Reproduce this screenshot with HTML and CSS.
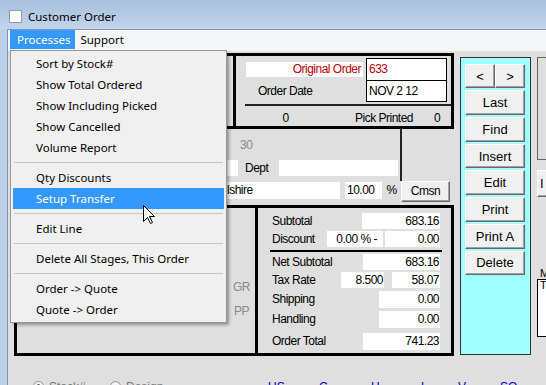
FILE: index.html
```html
<!DOCTYPE html>
<html lang="en">
<head>
    <meta charset="UTF-8">
    <title>Customer Order</title>
    <link rel="stylesheet" href="styles.css">
</head>
<body>
    <!-- barre de titre -->
    <div class="titlebar">
        <span class="appicon"></span>
        <span class="title">Customer Order</span>
    </div>

    <div class="client">
        <div class="menubar">
            <span class="mitem open">Processes</span>
            <span class="mitem">Support</span>
        </div>

        <div class="form">
            <div class="main">
                <!-- entete de commande -->
                <div class="topbox">
                    <div class="custcell"></div>
                    <div class="ordercell">
                        <div class="ohead">
                            <div class="olabels">
                                <div class="origlabel">Original Order</div>
                                <div class="datelabel">Order Date</div>
                            </div>
                            <div class="obox">
                                <div class="ofield red">633</div>
                                <div class="ofield">NOV 2 12</div>
                            </div>
                        </div>
                        <div class="oline"></div>
                        <div class="ofoot">
                            <span class="fz">0</span>
                            <span class="pp">Pick Printed</span>
                            <span class="pz">0</span>
                        </div>
                    </div>
                </div>

                <div class="mid">
                    <div class="midleft">
                        <div class="terms">30</div>
                        <div class="deptrow">
                            <div class="field contact"></div>
                            <div class="dept">Dept</div>
                            <div class="field deptf"></div>
                        </div>
                    </div>
                    <div class="midright"></div>
                </div>

                <div class="addrrow">
                    <div class="field addr">Wilshire</div>
                    <div class="field pct">10.00</div>
                    <div class="pctsign">%</div>
                    <button class="btn cmsn">Cmsn</button>
                </div>

                <!-- lignes et totaux -->
                <div class="bottombox">
                    <div class="linescell">
                        <div class="gr">GR</div>
                        <div class="pp2">PP</div>
                    </div>
                    <div class="totals">
                        <div class="trow r1">
                            <div class="tl">Subtotal</div>
                            <div class="val w78">683.16</div>
                        </div>
                        <div class="trow r2">
                            <div class="tl">Discount</div>
                            <div class="val disc">0.00 % -</div>
                            <div class="val w55 ml2">0.00</div>
                        </div>
                        <div class="trule"></div>
                        <div class="trow r3">
                            <div class="tl">Net Subtotal</div>
                            <div class="val w77">683.16</div>
                        </div>
                        <div class="trow r4">
                            <div class="tl">Tax Rate</div>
                            <div class="val w43">8.500</div>
                            <div class="val w48 ml8">58.07</div>
                        </div>
                        <div class="trow r5">
                            <div class="tl">Shipping</div>
                            <div class="val w61">0.00</div>
                        </div>
                        <div class="trow r6">
                            <div class="tl">Handling</div>
                            <div class="val w61">0.00</div>
                        </div>
                        <div class="trow r7">
                            <div class="tl">Order Total</div>
                            <div class="val w77">741.23</div>
                        </div>
                    </div>
                </div>
            </div>

            <!-- boutons de navigation -->
            <div class="nav">
                <div class="arrows">
                    <button class="btn navbtn half">&lt;</button>
                    <button class="btn navbtn half">&gt;</button>
                </div>
                <button class="btn navbtn">Last</button>
                <button class="btn navbtn">Find</button>
                <button class="btn navbtn">Insert</button>
                <button class="btn navbtn">Edit</button>
                <button class="btn navbtn">Print</button>
                <button class="btn navbtn">Print A</button>
                <button class="btn navbtn">Delete</button>
            </div>

            <div class="side">
                <div class="sidebox"></div>
                <button class="btn sidebtn">I</button>
                <div class="memolbl">M</div>
                <div class="memo">T</div>
            </div>
        </div>

        <div class="status">
            <div class="opt o1"><span class="radio on"></span>Stock#</div>
            <div class="opt o2"><span class="radio"></span>Design</div>
            <span class="blue b1">US</span>
            <span class="blue b2">C</span>
            <span class="blue b3">H</span>
            <span class="blue b4">L</span>
            <span class="blue b5">V</span>
            <span class="blue">SO</span>
        </div>
    </div>

    <!-- menu deroulant ouvert -->
    <div class="dropdown">
        <div class="ditem">Sort by Stock#</div>
        <div class="ditem">Show Total Ordered</div>
        <div class="ditem">Show Including Picked</div>
        <div class="ditem">Show Cancelled</div>
        <div class="ditem">Volume Report</div>
        <div class="dsep"></div>
        <div class="ditem">Qty Discounts</div>
        <div class="ditem hot">Setup Transfer</div>
        <div class="dsep"></div>
        <div class="ditem">Edit Line</div>
        <div class="dsep"></div>
        <div class="ditem">Delete All Stages, This Order</div>
        <div class="dsep"></div>
        <div class="ditem">Order -&gt; Quote</div>
        <div class="ditem">Quote -&gt; Order</div>
    </div>

    <svg class="cursor" width="13" height="20" viewBox="0 0 13 20">
        <path d="M0.5 0.5 L0.5 16.5 L4.5 12.5 L7.5 18.5 L9.5 17.5 L6.5 11.5 L11.5 11.5 Z" fill="#fff" stroke="#000" stroke-width="1"/>
    </svg>
</body>
</html>
```

FILE: styles.css
```css
body {
    margin: 0;
    width: 546px;
    height: 385px;
    overflow: hidden;
    position: relative;
    background: #bcd1e9;
    font-family: "Noto Sans", sans-serif;
    font-size: 11.5px;
    color: #000;
}
/* barre de titre */
.titlebar {
    height: 29px;
    box-sizing: border-box;
    padding: 10px 0 0 9px;
    display: flex;
    align-items: flex-start;
    background: linear-gradient(#a7c0de, #c2d5ea);
}
.appicon {
    width: 13px;
    height: 13px;
    box-sizing: border-box;
    background: #fff;
    border: 1px solid #8d9db2;
}
.title {
    margin-left: 6px;
    line-height: 14px;
}
.client {
    margin-left: 7px;
    height: 356px;
    border-left: 1px solid #8497b0;
    border-top: 1px solid #8497b0;
    background: #dfdfdf;
    overflow: hidden;
}
.menubar {
    height: 21px;
    background: #f5f6f7;
    display: flex;
    padding-left: 2px;
}
.mitem {
    height: 19px;
    line-height: 19px;
    padding: 0 6px 0 5px;
}
.mitem.open {
    background: #3399ff;
    color: #fff;
    padding: 0 5px 0 7px;
}
/* formulaire */
.form {
    display: flex;
    padding: 2px 0 0 6px;
    font-family: "Liberation Sans", Arial, sans-serif;
    font-size: 12px;
    letter-spacing: -0.5px;
    white-space: nowrap;
}
.main {
    width: 440px;
    flex: none;
}
.field {
    background: #fff;
    height: 16.5px;
    line-height: 16.5px;
    box-sizing: border-box;
}
.topbox {
    display: flex;
    height: 75.5px;
    box-sizing: border-box;
    border: 3px solid #000;
    overflow: hidden;
}
.custcell {
    width: 216px;
    border-right: 3px solid #000;
}
.ordercell {
    flex: 1;
}
.ohead {
    display: flex;
    padding: 2px 0 0 10px;
}
.olabels {
    width: 117px;
    margin-right: 3px;
}
.origlabel {
    margin-top: 3.5px;
    height: 15px;
    line-height: 15px;
    background: #fff;
    color: #c00000;
    text-align: right;
    padding-right: 2px;
}
.datelabel {
    margin-top: 3.5px;
    line-height: 22px;
    padding-left: 12px;
}
.obox {
    width: 81px;
    box-sizing: border-box;
    border: 1px solid #000;
    background: #fff;
}
.ofield {
    height: 20.5px;
    line-height: 20.5px;
    padding-left: 2px;
}
.ofield.red {
    color: #c00000;
    border-bottom: 1px solid #000;
}
.oline {
    margin: 2px 0 0 9px;
    border-top: 2px solid #222;
}
.ofoot {
    display: flex;
    padding-top: 4px;
    line-height: 16px;
}
.fz {
    width: 99px;
    text-align: center;
}
.pp {
    margin-left: 20px;
    width: 79px;
}
.mid {
    display: flex;
    height: 52px;
}
.midleft {
    width: 386px;
}
.midright {
    flex: 1;
    border-left: 2px solid #222;
}
.terms {
    padding: 9px 0 0 226px;
    line-height: 14px;
    color: #8a8a8a;
}
.deptrow {
    display: flex;
    margin-top: 8px;
}
.contact {
    margin-left: 100px;
    width: 124px;
}
.dept {
    width: 41px;
    padding-left: 7px;
    box-sizing: border-box;
    line-height: 16.5px;
}
.deptf {
    width: 119px;
}
.addrrow {
    display: flex;
    align-items: flex-start;
    height: 24.5px;
}
.addr {
    margin: 1.5px 0 0 198px;
    width: 128px;
    height: 17px;
    line-height: 17px;
    padding-left: 2px;
}
.pct {
    margin: 1.5px 0 0 5px;
    width: 37px;
    height: 17px;
    line-height: 17px;
    padding-left: 2px;
}
.pctsign {
    margin-top: 1.5px;
    width: 19px;
    padding-left: 4.5px;
    box-sizing: border-box;
    line-height: 17px;
}
/* boutons style windows */
.btn {
    font-family: "Liberation Sans", Arial, sans-serif;
    font-size: 13px;
    letter-spacing: 0;
    color: #000;
    background: #f0f0f0;
    border: 1px solid;
    border-color: #fff #696969 #696969 #fff;
    box-shadow: inset -1px -1px 0 #a0a0a0;
    padding: 0;
    margin: 0;
    box-sizing: border-box;
}
.cmsn {
    font-size: 12px;
    letter-spacing: -0.5px;
    width: 49px;
    height: 21px;
}
.bottombox {
    display: flex;
    height: 150.5px;
    box-sizing: border-box;
    border: 3px solid #000;
}
.linescell {
    width: 238px;
    border-right: 3px solid #000;
    color: #8a8a8a;
    line-height: 14px;
}
.gr {
    margin: 72px 0 0 216px;
}
.pp2 {
    margin: 10px 0 0 217px;
}
.totals {
    flex: 1;
    padding: 5px 11px 0 14px;
}
.trow {
    display: flex;
    height: 16px;
    line-height: 16px;
}
.tl {
    flex: 1;
}
.r2 { margin-top: 1.5px; }
.r3 { margin-top: 2px; }
.r4 { margin-top: 2.5px; }
.r5 { margin-top: 3px; height: 16.5px; line-height: 16.5px; }
.r6 { margin-top: 3.5px; height: 16.5px; line-height: 16.5px; }
.r7 { margin-top: 5.5px; height: 16.5px; line-height: 16.5px; }
.trule {
    margin: 3px -2px 0 -2px;
    border-top: 2.5px solid #000;
}
.val {
    background: #fff;
    text-align: right;
    padding-right: 1px;
    box-sizing: border-box;
}
.w78 { width: 78px; }
.w77 { width: 77px; }
.w61 { width: 61px; }
.w55 { width: 55px; }
.w48 { width: 48px; }
.w43 { width: 43px; }
.ml2 { margin-left: 2px; }
.ml8 { margin-left: 8px; }
.disc {
    width: 56px;
    padding-right: 6px;
}
/* colonne cyan */
.nav {
    flex: none;
    width: 71px;
    height: 298px;
    margin: 4px 0 0 6px;
    box-sizing: border-box;
    border: 1px solid #333;
    background: #a0ffff;
    padding: 5.7px 5px 0 4px;
    display: flex;
    flex-direction: column;
    gap: 2px;
}
.arrows {
    display: flex;
}
.navbtn {
    width: 60px;
    height: 24.7px;
}
.navbtn.half {
    width: 30px;
}
.side {
    flex: none;
    width: 40px;
    margin: 4px 0 0 6px;
}
.sidebox {
    height: 103px;
    box-sizing: border-box;
    border: 1px solid #646464;
}
.sidebtn {
    display: block;
    margin-top: 10px;
    width: 40px;
    height: 27px;
    text-align: left;
    padding-left: 2px;
}
.memolbl {
    margin-top: 71px;
    font-size: 11px;
    line-height: 11px;
    padding-left: 3px;
}
.memo {
    height: 58px;
    box-sizing: border-box;
    border: 1px solid #000;
    background: #fff;
    font-size: 11px;
    line-height: 11px;
    padding: 0 2px;
}
/* ligne du bas */
.status {
    display: flex;
    margin-top: 24.5px;
    padding-left: 25px;
    line-height: 14px;
    font-family: "Liberation Sans", Arial, sans-serif;
    font-size: 12px;
}
.opt {
    display: flex;
    align-items: flex-start;
    color: #777;
}
.o1 { width: 77px; }
.o2 { width: 158px; }
.radio {
    width: 11px;
    height: 11px;
    margin: 1px 5px 0 0;
    box-sizing: border-box;
    border: 1px solid #8f8f8f;
    border-radius: 50%;
    background: #f4f4f4;
}
.radio.on {
    background: radial-gradient(circle, #555 0 2px, #f4f4f4 2.5px);
}
.blue {
    color: #0000c0;
}
.b1 { width: 51px; }
.b2 { width: 52px; }
.b3 { width: 50px; }
.b4 { width: 37px; }
.b5 { width: 42px; }
/* menu deroulant */
.dropdown {
    position: absolute;
    left: 10px;
    top: 50px;
    width: 217px;
    box-sizing: border-box;
    border: 1px solid #979797;
    background: #f0f0f0;
    padding: 2px;
    box-shadow: 3px 3px 3px -1px rgba(0, 0, 0, 0.35);
}
.ditem {
    height: 21px;
    line-height: 21px;
    padding-left: 23px;
}
.ditem.hot {
    background: #3399ff;
    color: #fff;
}
.dsep {
    margin: 4px 1px;
    border-top: 1px solid #c5c5c5;
}
.cursor {
    position: absolute;
    left: 143px;
    top: 205px;
}
```
